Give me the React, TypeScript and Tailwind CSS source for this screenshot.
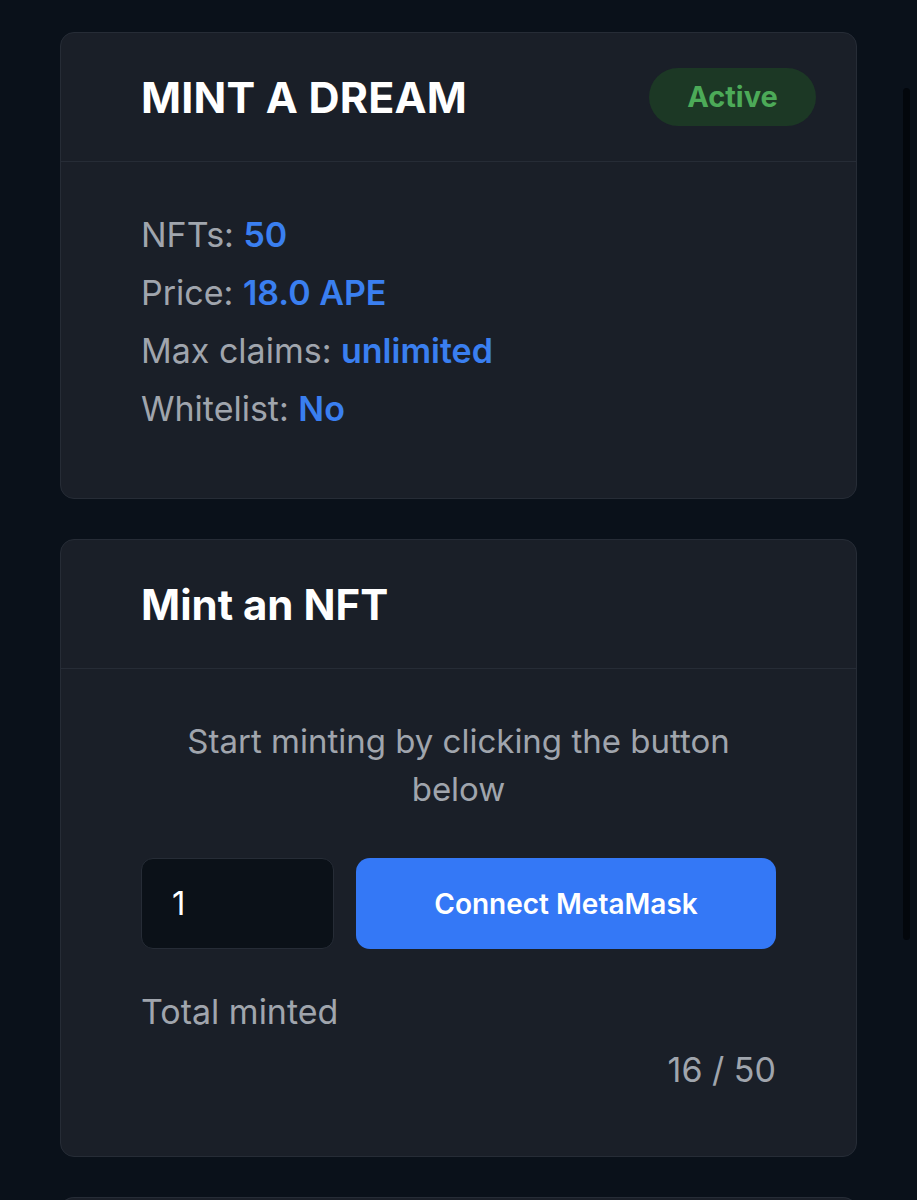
import React from "react";

const font = { fontFamily: "Inter, 'Open Sans', sans-serif" };

export default function App() {
  return (
    <div className="relative min-h-[1200px] bg-[#0a111a] px-[60px] pt-[32px]" style={font}>
      <div className="flex flex-col gap-[40px]">
        <div className="rounded-[14px] border border-[#262c36] bg-[#1a1f28]">
          <div className="flex h-[129px] items-center justify-between border-b border-[#262c36] pl-[80px] pr-[40px]">
            <h1 className="text-[43px] font-bold tracking-[0.2px] text-white">MINT A DREAM</h1>
            <span className="flex h-[58px] w-[167px] items-center justify-center rounded-full bg-[#1c3825] text-[29px] font-bold text-[#4caa58]">
              Active
            </span>
          </div>
          <div className="pl-[80px] pt-[44px] pb-[60px] text-[34px] leading-[58px] text-[#a0a5ad]">
            <div>NFTs: <span className="font-semibold text-[#3a7ff0]">50</span></div>
            <div>Price: <span className="font-semibold text-[#3a7ff0]">18.0 APE</span></div>
            <div>Max claims: <span className="font-semibold text-[#3a7ff0]">unlimited</span></div>
            <div>Whitelist: <span className="font-semibold text-[#3a7ff0]">No</span></div>
          </div>
        </div>

        <div className="rounded-[14px] border border-[#262c36] bg-[#1a1f28]">
          <div className="flex h-[129px] items-center border-b border-[#262c36] pl-[80px] pr-[40px]">
            <h2 className="text-[42px] font-bold text-white">Mint an NFT</h2>
          </div>
          <div className="px-[80px] pt-[48px] pb-[66px]">
            <p className="px-[10px] text-center text-[33px] leading-[48px] text-[#a0a5ad]">
              Start minting by clicking the button below
            </p>
            <div className="mt-[45px] flex gap-[22px]">
              <div className="flex h-[91px] w-[193px] items-center rounded-[12px] border border-[#262c36] bg-[#0b1118] pl-[30px] text-[33px] text-white">
                1
              </div>
              <button className="h-[91px] flex-1 rounded-[14px] bg-[#3478f6] text-[28px] font-semibold text-white">
                Connect MetaMask
              </button>
            </div>
            <div className="mt-[43px] text-[34px] leading-[40px] text-[#a0a5ad]">Total minted</div>
            <div className="mt-[18px] text-right text-[34px] leading-[40px] text-[#a0a5ad]">16 / 50</div>
          </div>
        </div>

        <div className="h-[60px] rounded-t-[14px] border border-b-0 border-[#262c36] bg-[#1a1f28]" />
      </div>
      <div className="absolute right-[7px] top-[88px] h-[852px] w-[7px] rounded-full bg-[#03070c]" />
    </div>
  );
}
